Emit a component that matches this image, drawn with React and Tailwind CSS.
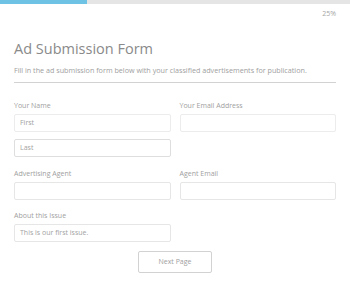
import React from "react";

function Field({ placeholder, className = "" }) {
  return (
    <div
      className={`h-[18px] border bg-white rounded-[2px] flex items-center px-[5px] text-[7px] text-[#a2a2a2] ${className}`}
    >
      {placeholder}
    </div>
  );
}

function Label({ children }) {
  return <div className="text-[7px] leading-[10px] text-[#a0a0a0] mb-[3px]">{children}</div>;
}

export default function App() {
  return (
    <div
      className="w-[350px] h-[288px] bg-white overflow-hidden"
      style={{ fontFamily: '"Open Sans", sans-serif' }}
    >
      <div className="h-[4px] bg-[#e5e5e5] flex">
        <div className="w-[87px] h-full bg-[#6ec3e5]" />
      </div>
      <div className="px-[14px]">
        <div className="text-right text-[7px] leading-[10px] text-[#a5a5a5] mt-[5px]">25%</div>
        <div className="text-[14.5px] leading-[20px] text-[#8a8a8a] mt-[20px]">Ad Submission Form</div>
        <div className="text-[7.2px] leading-[10px] text-[#a0a0a0] mt-[6px] whitespace-nowrap">
          Fill in the ad submission form below with your classified advertisements for publication.
        </div>
        <div className="border-t border-[#d2d2d2] mt-[7px]" />

        <div className="grid grid-cols-2 gap-x-[9px] mt-[18px]">
          <div>
            <Label>Your Name</Label>
            <Field placeholder="First" className="border-[#ececec]" />
            <Field placeholder="Last" className="mt-[7px] border-[#dedede]" />
          </div>
          <div>
            <Label>Your Email Address</Label>
            <Field placeholder="" className="border-[#ececec]" />
          </div>
        </div>

        <div className="grid grid-cols-2 gap-x-[9px] mt-[12px]">
          <div>
            <Label>Advertising Agent</Label>
            <Field placeholder="" className="border-[#e6e6e6]" />
          </div>
          <div>
            <Label>Agent Email</Label>
            <Field placeholder="" className="border-[#e6e6e6]" />
          </div>
        </div>

        <div className="grid grid-cols-2 gap-x-[9px] mt-[11px]">
          <div>
            <Label>About this Issue</Label>
            <Field placeholder="This is our first issue." className="border-[#e6e6e6]" />
          </div>
        </div>

        <div className="flex justify-center mt-[9px]">
          <div className="w-[74px] h-[22px] border border-[#d2d2d2] rounded-[2px] flex items-center justify-center text-[7px] text-[#a0a0a0]">
            Next Page
          </div>
        </div>
      </div>
    </div>
  );
}
